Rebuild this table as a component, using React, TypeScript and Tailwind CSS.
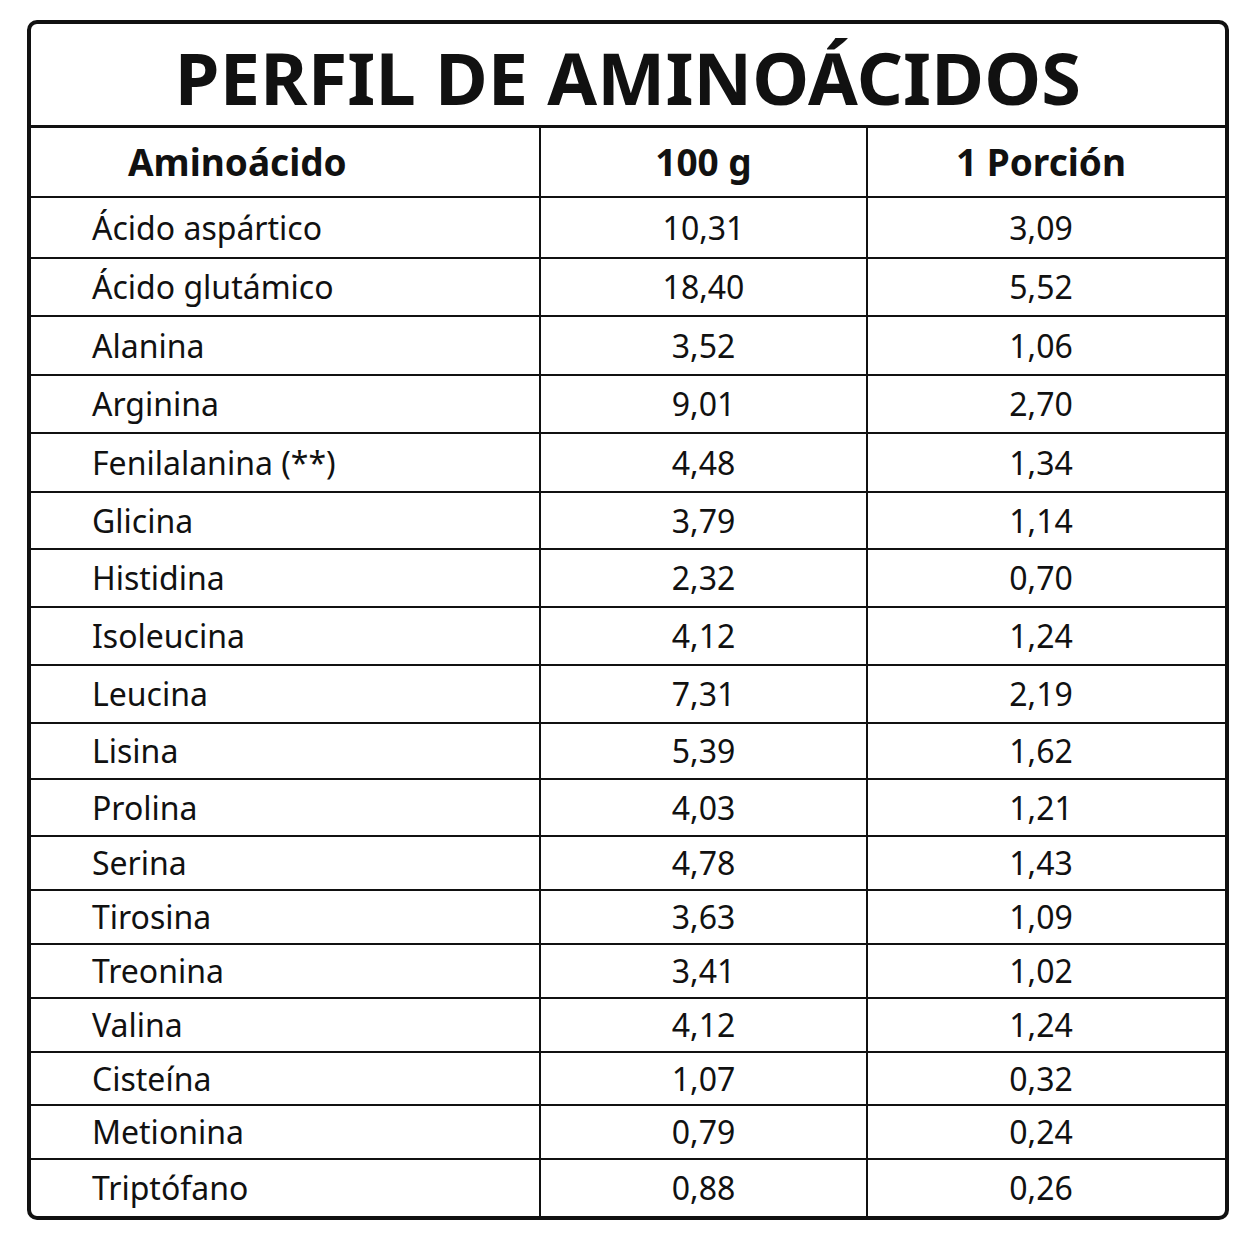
const rows = [
  { name: "Ácido aspártico", g100: "10,31", portion: "3,09", h: "h-[61px]" },
  { name: "Ácido glutámico", g100: "18,40", portion: "5,52", h: "h-[58px]" },
  { name: "Alanina", g100: "3,52", portion: "1,06", h: "h-[59px]" },
  { name: "Arginina", g100: "9,01", portion: "2,70", h: "h-[58px]" },
  { name: "Fenilalanina (**)", g100: "4,48", portion: "1,34", h: "h-[59px]" },
  { name: "Glicina", g100: "3,79", portion: "1,14", h: "h-[57px]" },
  { name: "Histidina", g100: "2,32", portion: "0,70", h: "h-[58px]" },
  { name: "Isoleucina", g100: "4,12", portion: "1,24", h: "h-[58px]" },
  { name: "Leucina", g100: "7,31", portion: "2,19", h: "h-[58px]" },
  { name: "Lisina", g100: "5,39", portion: "1,62", h: "h-[56px]" },
  { name: "Prolina", g100: "4,03", portion: "1,21", h: "h-[57px]" },
  { name: "Serina", g100: "4,78", portion: "1,43", h: "h-[54px]" },
  { name: "Tirosina", g100: "3,63", portion: "1,09", h: "h-[54px]" },
  { name: "Treonina", g100: "3,41", portion: "1,02", h: "h-[54px]" },
  { name: "Valina", g100: "4,12", portion: "1,24", h: "h-[54px]" },
  { name: "Cisteína", g100: "1,07", portion: "0,32", h: "h-[53px]" },
  { name: "Metionina", g100: "0,79", portion: "0,24", h: "h-[54px]" },
  { name: "Triptófano", g100: "0,88", portion: "0,26", h: "h-[56px]" },
];

const AminoTable = () => {
  return (
    <div className="ml-[27px] mt-[20px] w-[1202px] h-[1200px] border-4 border-[#111] rounded-[10px] overflow-hidden bg-white">
      <div className="h-[104px] border-b-[3px] border-[#111] flex items-center justify-center pt-1">
        <h1 className="text-[72px] font-bold leading-none tracking-[0.2px] text-[#111]">
          PERFIL DE AMINOÁCIDOS
        </h1>
      </div>

      <div className="grid grid-cols-[510px_327px_1fr] h-[70px] border-b-2 border-[#111] text-[37px] font-bold text-[#111]">
        <div className="border-r-2 border-[#111] flex items-center pl-[97px]">Aminoácido</div>
        <div className="border-r-2 border-[#111] flex items-center justify-center">100 g</div>
        <div className="flex items-center justify-center pr-[11px]">1 Porción</div>
      </div>

      {rows.map((row, i) => (
        <div
          key={row.name}
          className={`grid grid-cols-[510px_327px_1fr] ${row.h} ${
            i < rows.length - 1 ? "border-b-2 border-[#111]" : ""
          } text-[32px] text-[#111]`}
        >
          <div className="border-r-2 border-[#111] flex items-center pl-[61px]">{row.name}</div>
          <div className="border-r-2 border-[#111] flex items-center justify-center">{row.g100}</div>
          <div className="flex items-center justify-center pr-[11px]">{row.portion}</div>
        </div>
      ))}
    </div>
  );
};

export default function App() {
  return (
    <div
      className="w-[1254px] h-[1254px] bg-white overflow-hidden"
      style={{ fontFamily: '"Noto Sans", "Open Sans", sans-serif' }}
    >
      <AminoTable />
    </div>
  );
}
